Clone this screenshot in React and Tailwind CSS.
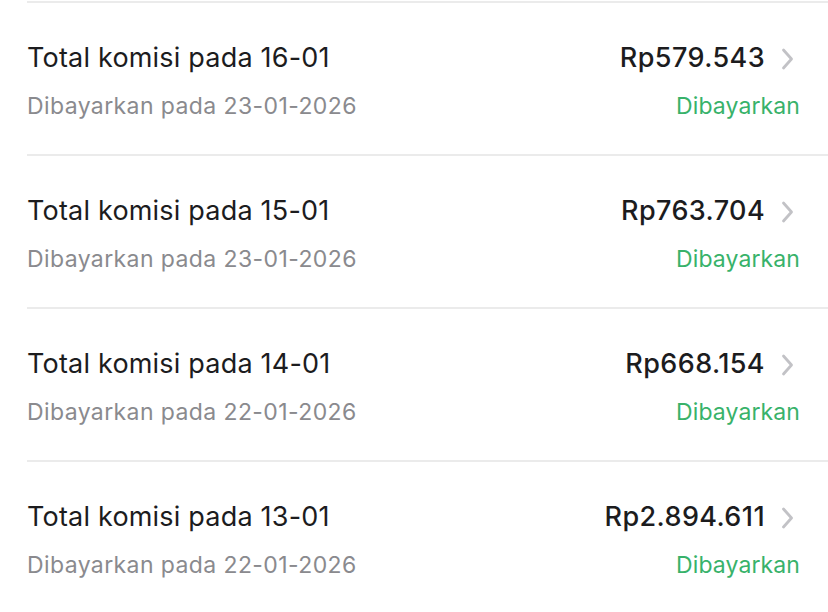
import React from "react";

const rows = [
  { day: "16-01", amount: "Rp579.543", paid: "23-01-2026" },
  { day: "15-01", amount: "Rp763.704", paid: "23-01-2026" },
  { day: "14-01", amount: "Rp668.154", paid: "22-01-2026" },
  { day: "13-01", amount: "Rp2.894.611", paid: "22-01-2026" },
];

function Chevron() {
  return (
    <svg width="13" height="22" viewBox="0 0 13 22" className="ml-[16px] mr-[6px] mt-[1px]">
      <path d="M2.5 2 L10.5 11 L2.5 20" fill="none" stroke="#c2c2c6" strokeWidth="2.8" strokeLinecap="round" strokeLinejoin="round" />
    </svg>
  );
}

export default function App() {
  return (
    <div className="w-[828px] h-[612px] overflow-hidden bg-white pt-px" style={{ fontFamily: "Inter, 'Noto Sans', sans-serif" }}>
      {rows.map((r) => (
        <div key={r.day} className="pl-[27px]">
          <div className="h-[2px] bg-[#ebebeb]" />
          <div className="pr-[28px] pt-[39px] pb-[34px]">
            <div className="flex items-center justify-between h-[32px]">
              <span className="text-[27px] leading-[32px] tracking-[0.2px] text-[#1c1c1e]">Total komisi pada {r.day}</span>
              <div className="flex items-center">
                <span className="text-[27px] leading-[32px] tracking-[0.4px] font-medium text-[#1c1c1e]">{r.amount}</span>
                <Chevron />
              </div>
            </div>
            <div className="flex items-center justify-between h-[28px] mt-[18px]">
              <span className="text-[23px] leading-[28px] tracking-[0.4px] text-[#8a8a8e]">Dibayarkan pada {r.paid}</span>
              <span className="text-[23px] leading-[28px] tracking-[0.1px] text-[#38b26a]">Dibayarkan</span>
            </div>
          </div>
        </div>
      ))}
    </div>
  );
}
